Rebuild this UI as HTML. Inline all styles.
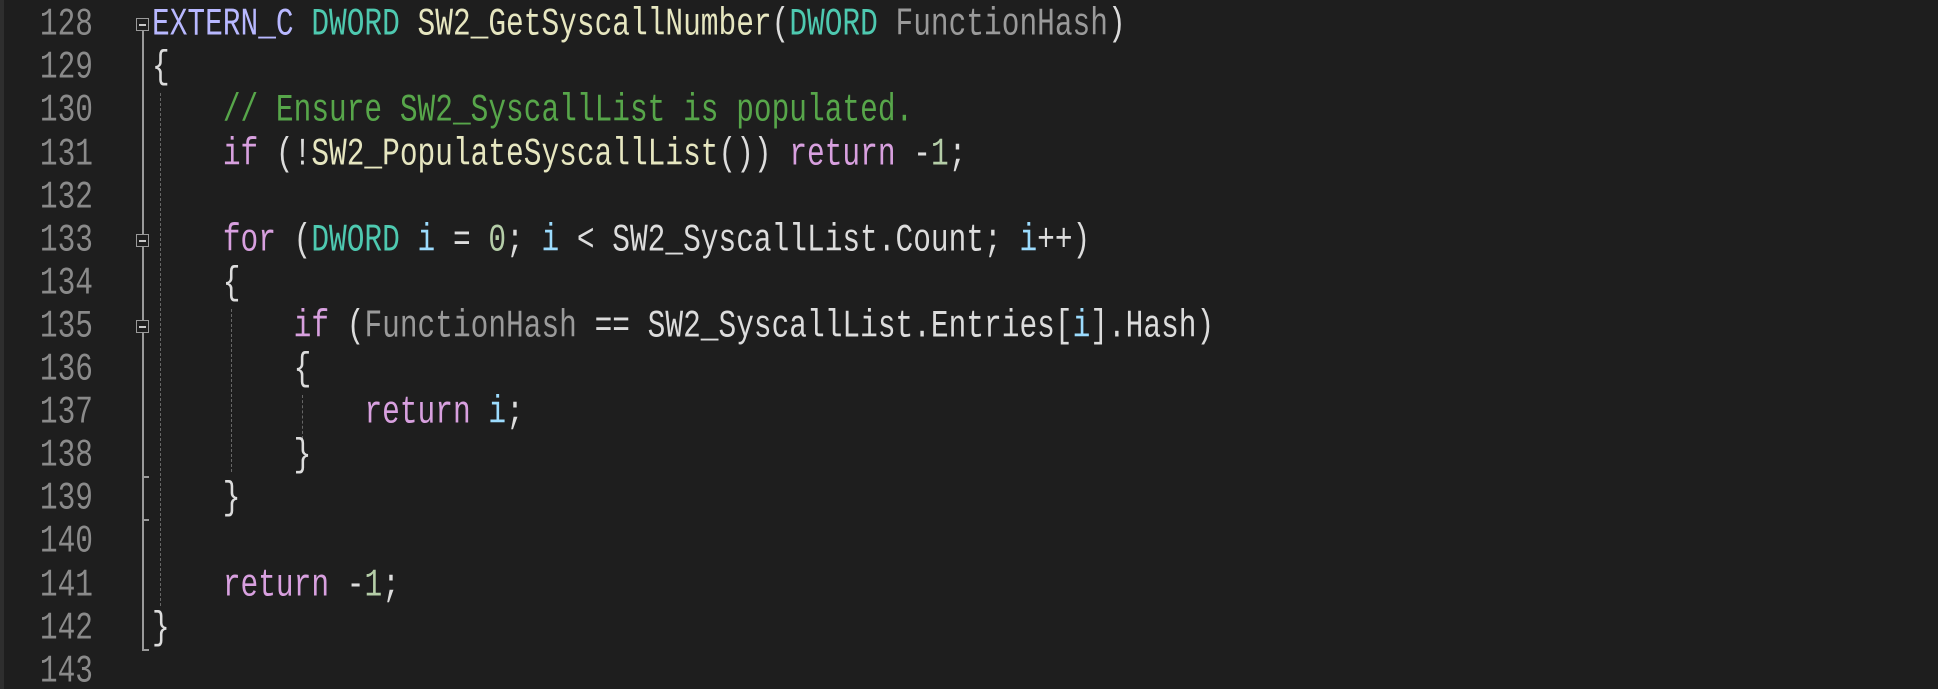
<!DOCTYPE html>
<html><head><meta charset="utf-8"><style>
html,body{margin:0;padding:0;background:#1e1e1e;width:1938px;height:689px;overflow:hidden;position:relative}
.strip{position:absolute;left:0;top:0;width:4px;height:689px;background:#2e2e2e}
.l{position:absolute;left:0;height:43.1px;line-height:43.1px;font-family:"Liberation Mono",monospace;font-size:29.5px;white-space:pre;transform:scaleY(1.32);transform-origin:0 50%}
.n{position:absolute;left:0;width:93px;text-align:right;color:#8a8a8a}
.c{position:absolute;left:152px;color:#dcdcdc}
.k{color:#d8a0df}.m{color:#b8b8ff}.t{color:#4ec9b0}.f{color:#e6e6c0}.cm{color:#57a64a}.p{color:#9a9a9a}.v{color:#9cdcfe}.num{color:#b5cea8}
.g{position:absolute;width:0;border-left:1.5px dashed #666}
.fl{position:absolute;background:#9a9a9a}
.box{position:absolute;width:11px;height:11px;border:1px solid #9a9a9a;background:#1e1e1e}
.box:after{content:"";position:absolute;left:2px;top:5px;width:7px;height:1.5px;background:#c8c8c8}
</style></head><body>
<div class="strip"></div>
<div class="fl" style="left:142px;top:31px;width:1.5px;height:619px"></div>
<div class="fl" style="left:142px;top:476px;width:7px;height:1.5px"></div>
<div class="fl" style="left:142px;top:519px;width:7px;height:1.5px"></div>
<div class="fl" style="left:142px;top:649px;width:7px;height:1.5px"></div>
<div class="box" style="left:136px;top:18px"></div>
<div class="box" style="left:136px;top:234px"></div>
<div class="box" style="left:136px;top:320px"></div>
<div class="g" style="left:160px;top:93px;height:513px"></div>
<div class="g" style="left:231px;top:309px;height:163px"></div>
<div class="g" style="left:302px;top:395px;height:44px"></div>

<div class="l" style="top:3.2px"><span class="n">128</span><span class="c"><span class="m">EXTERN_C</span> <span class="t">DWORD</span> <span class="f">SW2_GetSyscallNumber</span>(<span class="t">DWORD</span> <span class="p">FunctionHash</span>)</span></div>
<div class="l" style="top:46.3px"><span class="n">129</span><span class="c">{</span></div>
<div class="l" style="top:89.4px"><span class="n">130</span><span class="c">    <span class="cm">// Ensure SW2_SyscallList is populated.</span></span></div>
<div class="l" style="top:132.5px"><span class="n">131</span><span class="c">    <span class="k">if</span> (!<span class="f">SW2_PopulateSyscallList</span>()) <span class="k">return</span> -<span class="num">1</span>;</span></div>
<div class="l" style="top:175.6px"><span class="n">132</span><span class="c"></span></div>
<div class="l" style="top:218.7px"><span class="n">133</span><span class="c">    <span class="k">for</span> (<span class="t">DWORD</span> <span class="v">i</span> = <span class="num">0</span>; <span class="v">i</span> &lt; SW2_SyscallList.Count; <span class="v">i</span>++)</span></div>
<div class="l" style="top:261.8px"><span class="n">134</span><span class="c">    {</span></div>
<div class="l" style="top:304.9px"><span class="n">135</span><span class="c">        <span class="k">if</span> (<span class="p">FunctionHash</span> == SW2_SyscallList.Entries[<span class="v">i</span>].Hash)</span></div>
<div class="l" style="top:348px"><span class="n">136</span><span class="c">        {</span></div>
<div class="l" style="top:391.1px"><span class="n">137</span><span class="c">            <span class="k">return</span> <span class="v">i</span>;</span></div>
<div class="l" style="top:434.2px"><span class="n">138</span><span class="c">        }</span></div>
<div class="l" style="top:477.3px"><span class="n">139</span><span class="c">    }</span></div>
<div class="l" style="top:520.4px"><span class="n">140</span><span class="c"></span></div>
<div class="l" style="top:563.5px"><span class="n">141</span><span class="c">    <span class="k">return</span> -<span class="num">1</span>;</span></div>
<div class="l" style="top:606.6px"><span class="n">142</span><span class="c">}</span></div>
<div class="l" style="top:649.7px"><span class="n">143</span><span class="c"></span></div>
</body></html>
